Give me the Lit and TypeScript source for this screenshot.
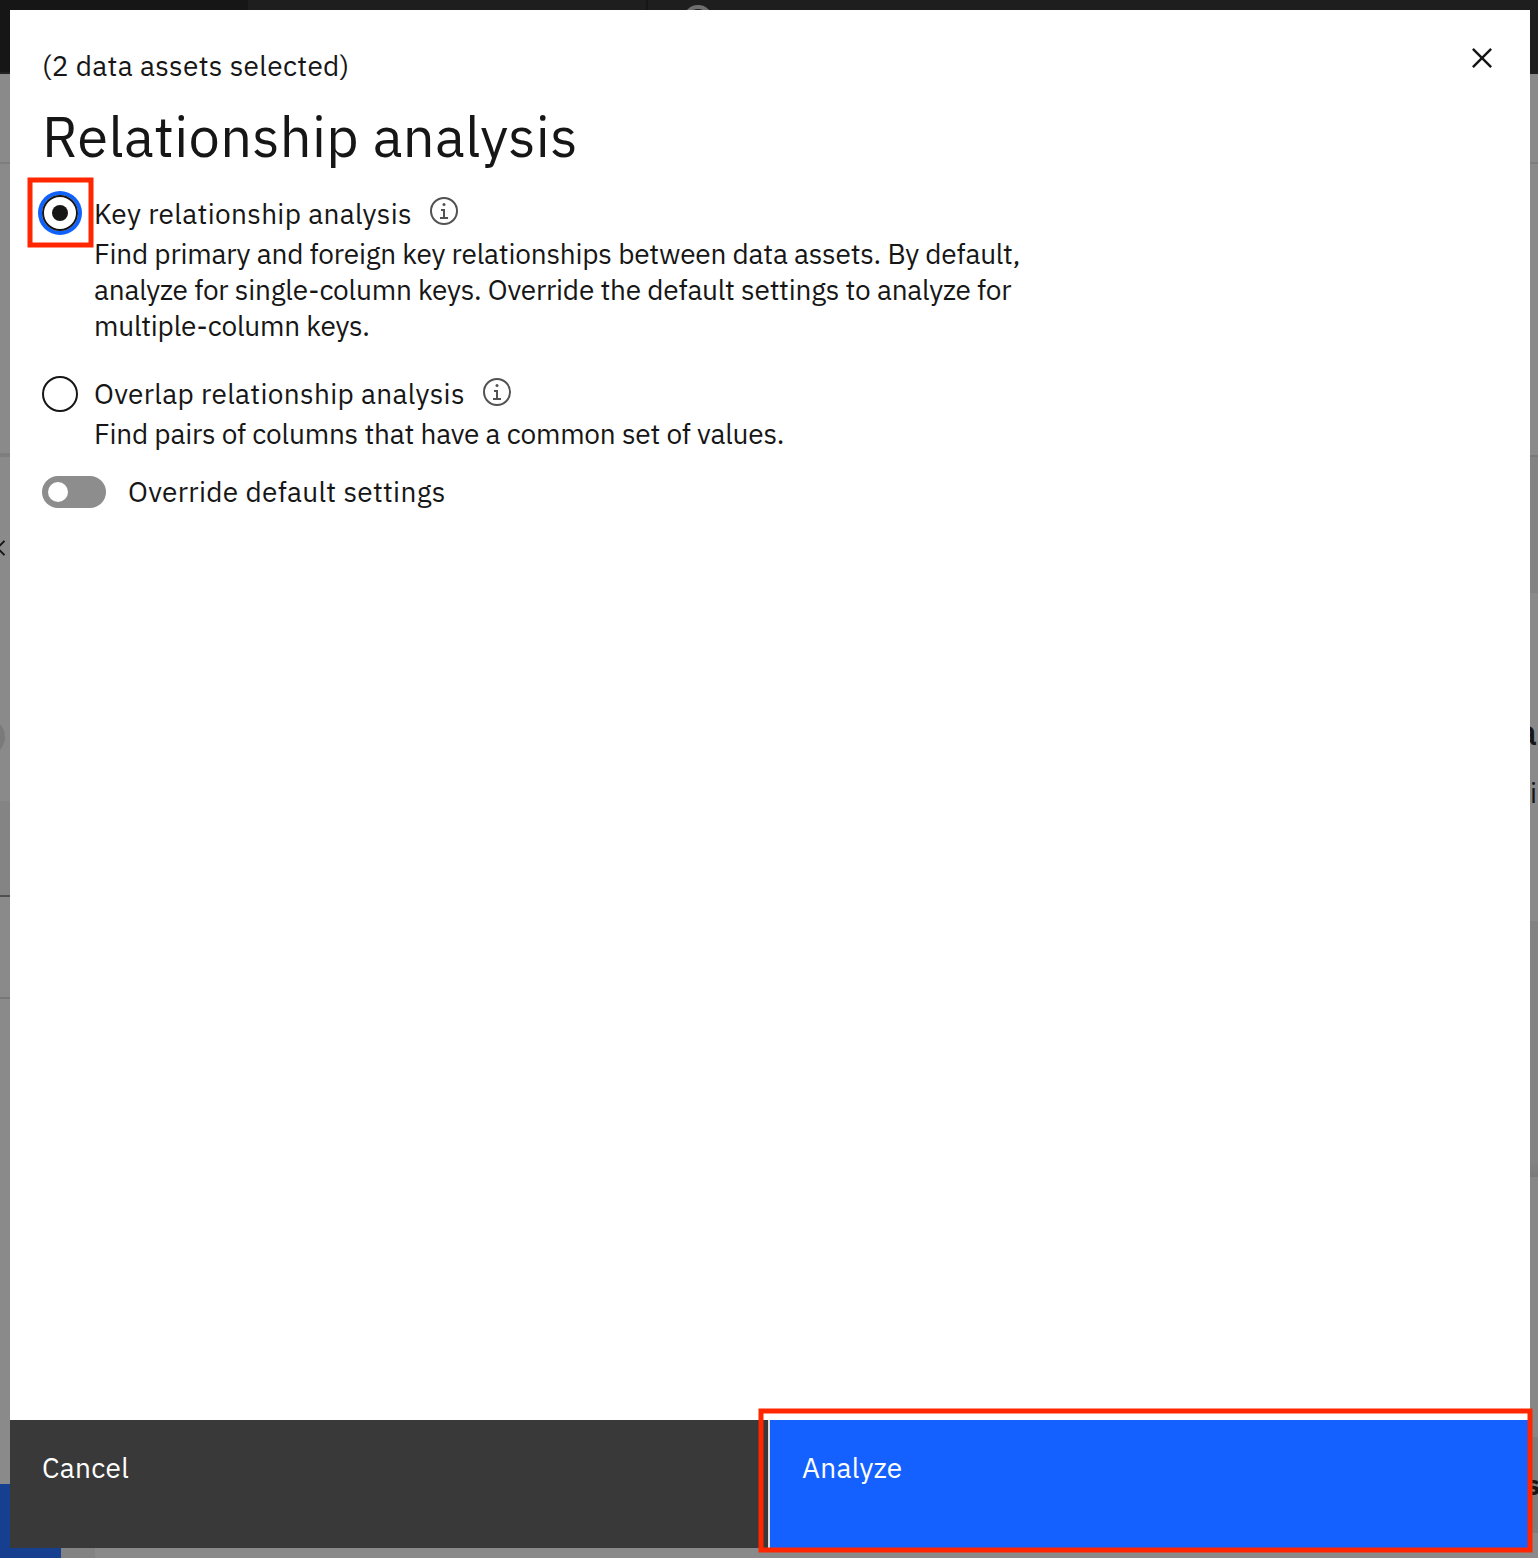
import { LitElement, html, css, svg } from "lit";
import { customElement, property } from "lit/decorators.js";

@customElement("info-icon")
class InfoIcon extends LitElement {
  static styles = css`
    :host { display: block; width: 32px; height: 32px; flex: none; }
    svg { display: block; fill: #525252; }
  `;
  render() {
    return html`<svg width="32" height="32" viewBox="0 0 32 32">
      <path d="M17 22 17 14 13 14 13 16 15 16 15 22 12 22 12 24 20 24 20 22z"></path>
      <circle cx="16" cy="9.5" r="1.5"></circle>
      <path d="M16 30A14 14 0 1 1 30 16 14 14 0 0 1 16 30ZM16 4A12 12 0 1 0 28 16 12 12 0 0 0 16 4Z"></path>
    </svg>`;
  }
}

@customElement("radio-option")
class RadioOption extends LitElement {
  @property() label = "";
  @property() description = "";
  @property({ type: Boolean }) checked = false;
  static styles = css`
    :host { display: flex; gap: 16px; }
    .dial { box-sizing: border-box; flex: none; width: 36px; height: 36px; border: 2px solid #161616; border-radius: 50%; display: flex; align-items: center; justify-content: center; }
    .dial.on { margin-top: -1px; box-shadow: 0 0 0 4px #0f62fe; }
    .dot { width: 16px; height: 16px; border-radius: 50%; background: #161616; }
    .row { display: flex; gap: 16px; height: 36px; margin-bottom: 4px; align-items: flex-start; }
    .label { letter-spacing: 0.32px; white-space: nowrap; }
    .on-row info-icon { margin-top: -1px; }
    .desc { width: 940px; letter-spacing: -0.21px; }
    .dial.off { margin-top: 0; }
  `;
  render() {
    return html`
      <div class="dial ${this.checked ? "on" : "off"}">${this.checked ? html`<div class="dot"></div>` : ""}</div>
      <div>
        <div class="row ${this.checked ? "on-row" : ""}"><span class="label">${this.label}</span><info-icon></info-icon></div>
        <div class="desc">${this.description}</div>
      </div>`;
  }
}

@customElement("page-backdrop")
class PageBackdrop extends LitElement {
  static styles = css`
    :host { display: flex; flex-direction: column; height: 1558px; background: #8a8a8a; color: #161616; overflow: hidden; }
    .bar { display: flex; flex: none; height: 74px; background: #1e1e1e; }
    .brand { width: 248px; background: #161616; box-sizing: border-box; border-bottom: 2px solid #222; }
    .split { width: 398px; border-right: 2px solid #161616; }
    .search { box-sizing: border-box; width: 30px; height: 30px; margin: 5px 0 0 35px; border: 4px solid #6f6f6f; border-radius: 50%; }
    .body { flex: 1; display: flex; justify-content: space-between; min-height: 0; }
    .left, .right { display: flex; flex-direction: column; overflow: hidden; }
    .left { width: 10px; }
    .right { width: 8px; }
    .left > *, .right > * { flex: none; box-sizing: border-box; overflow: hidden; }
    .l1, .r1 { height: 90px; border-bottom: 2px solid #7e7e7e; }
    .l2 { height: 293px; border-bottom: 4px solid #7e7e7e; }
    .l3 { height: 344px; padding-top: 83px; }
    .l3 svg { display: block; }
    .avatar { width: 38px; height: 38px; margin: 162px 0 0 -33px; border-radius: 50%; background: #7a7a7a; }
    .l4 { height: 96px; background: #848484; border-bottom: 2px solid #505050; }
    .l5 { height: 102px; border-bottom: 2px solid #777; }
    .l6 { height: 485px; }
    .l7 { height: 74px; background: #163f8f; }
    .r2 { height: 293px; border-bottom: 2px solid #797979; }
    .r3 { height: 136px; background: #838383; }
    .r4 { height: 328px; padding-top: 121px; }
    .r5 { height: 256px; background: linear-gradient(#838383 94%, #7b7b7b); }
    .r6 { height: 260px; background: #878787; }
    .r7 { height: 96px; background: #7e7e7e; padding-top: 30px; }
    .g { display: block; direction: rtl; width: 8px; height: 36px; line-height: 36px; font-size: 28px; }
    .big { margin-bottom: 25px; font-size: 36px; font-weight: 500; width: 7px; }
    .strong { font-weight: 700; width: 10px; }
    .i { width: 7px; }
    .foot { display: flex; flex: none; height: 10px; }
    .f1 { width: 61px; background: #163f8f; }
    .f2 { width: 34px; background: #838383; }
  `;
  render() {
    return html`
      <div class="bar"><div class="brand"></div><div class="split"></div><div class="search"></div></div>
      <div class="body">
        <div class="left">
          <div class="l1"></div><div class="l2"></div>
          <div class="l3">
            <svg width="10" height="16" viewBox="0 0 10 16"><path d="M4.5 .9-2.6 8 4.5 15.1" fill="none" stroke="#161616" stroke-width="2"></path></svg>
            <div class="avatar"></div>
          </div>
          <div class="l4"></div><div class="l5"></div><div class="l6"></div><div class="l7"></div>
        </div>
        <div class="right">
          <div class="r1"></div><div class="r2"></div><div class="r3"></div>
          <div class="r4"><span class="g big">a</span><span class="g i">i</span></div>
          <div class="r5"></div><div class="r6"></div>
          <div class="r7"><span class="g strong">s</span></div>
        </div>
      </div>
      <div class="foot"><div class="f1"></div><div class="f2"></div></div>`;
  }
}

@customElement("app-root")
class AppRoot extends LitElement {
  static styles = css`
    :host { display: block; position: relative; width: 1538px; height: 1558px; overflow: hidden; font: 400 28px/36px "IBM Plex Sans", Roboto, "Liberation Sans", sans-serif; color: #161616; }
    .modal { position: absolute; inset: 10px 8px 10px 10px; display: flex; flex-direction: column; background: #fff; }
    .head { display: flex; justify-content: space-between; padding: 38px 28px 0 32px; height: 176px; box-sizing: border-box; }
    .count { letter-spacing: 0.32px; }
    .title { margin: 16px 0 0; font-size: 56px; line-height: 72px; font-weight: 400; letter-spacing: 0.32px; white-space: nowrap; }
    .close { width: 40px; height: 40px; margin-top: -10px; fill: #161616; }
    .content { flex: 1; padding: 10px 32px 0; display: flex; flex-direction: column; }
    .second { margin-top: 32px; }
    .toggle { display: flex; gap: 22px; margin-top: 22px; letter-spacing: 0.32px; }
    .track { box-sizing: border-box; width: 64px; height: 32px; padding: 6px; margin-top: 2px; border-radius: 16px; background: #8d8d8d; }
    .knob { width: 20px; height: 20px; border-radius: 50%; background: #fff; }
    .actions { display: flex; height: 128px; color: #fff; letter-spacing: 0.32px; }
    .btn { flex: none; width: 50%; box-sizing: border-box; padding: 30px 32px; }
    .cancel { background: #393939; border-right: 2px solid #e0e0e0; }
    .go { background: #1461ff; }
    .marks { position: absolute; inset: 0; fill: none; stroke: #ff2600; stroke-width: 5; }
  `;
  render() {
    return html`
      <page-backdrop></page-backdrop>
      <div class="modal">
        <div class="head">
          <div><div class="count">(2 data assets selected)</div><h1 class="title">Relationship analysis</h1></div>
          <svg class="close" viewBox="0 0 32 32"><path d="M24 9.4L22.6 8 16 14.6 9.4 8 8 9.4 14.6 16 8 22.6 9.4 24 16 17.4 22.6 24 24 22.6 17.4 16 24 9.4z"></path></svg>
        </div>
        <div class="content">
          <radio-option checked label="Key relationship analysis" description="Find primary and foreign key relationships between data assets. By default, analyze for single-column keys. Override the default settings to analyze for multiple-column keys."></radio-option>
          <radio-option class="second" label="Overlap relationship analysis" description="Find pairs of columns that have a common set of values."></radio-option>
          <div class="toggle"><div class="track"><div class="knob"></div></div><span>Override default settings</span></div>
        </div>
        <div class="actions"><div class="btn cancel">Cancel</div><div class="btn go">Analyze</div></div>
      </div>
      <svg class="marks" width="1538" height="1558">
        ${[[30, 180, 61, 65], [761, 1411, 769, 139]].map(
          ([x, y, w, h]) => svg`<rect x=${x} y=${y} width=${w} height=${h}></rect>`
        )}
      </svg>`;
  }
}
